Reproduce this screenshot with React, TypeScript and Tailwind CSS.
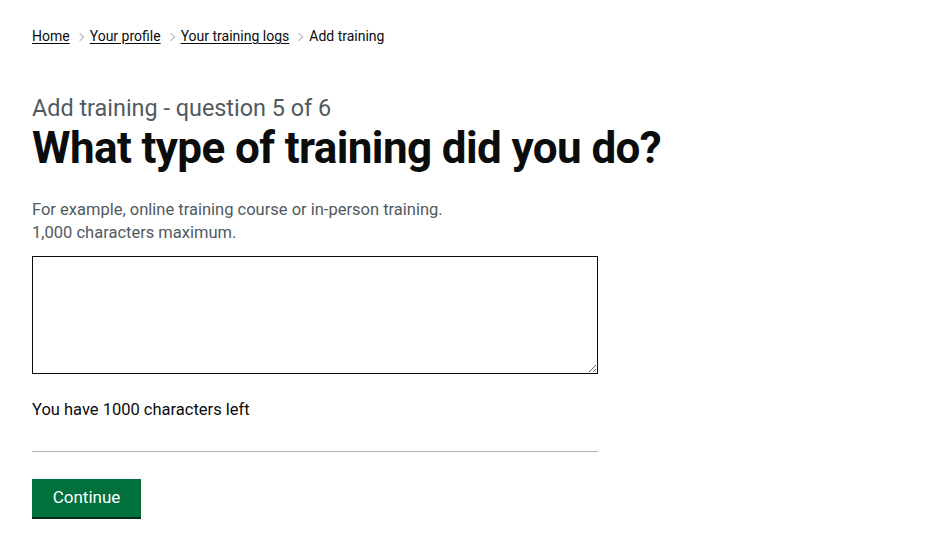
export default function App() {
  const crumbs = ['Home', 'Your profile', 'Your training logs']
  return (
    <div className="min-h-[549px] bg-white px-8 text-[#0b0c0c]" style={{ fontFamily: 'Roboto, "Liberation Sans", sans-serif' }}>
      {/* breadcrumbs */}
      <nav className="pt-[28px]">
        <ol className="flex items-center text-[14px] leading-[16px]">
          {crumbs.map((c) => (
            <li key={c} className="flex items-center">
              <a href="#" className="underline underline-offset-2 text-[#0b0c0c]">{c}</a>
              <span className="mx-[7px] mt-[2px] inline-block h-[6px] w-[6px] rotate-45 border-r border-t border-[#b1b4b6]" />
            </li>
          ))}
          <li>Add training</li>
        </ol>
      </nav>

      <div className="w-[566px] pt-[50px]">
        <span className="block text-[23.4px] leading-[28px] text-[#505a5f]">Add training - question 5 of 6</span>
        <h1 className="mt-[2px] whitespace-nowrap text-[44px] font-bold leading-[48px] tracking-[-0.6px]">What type of training did you do?</h1>

        <div className="mt-[26px] text-[16.5px] leading-[23px] text-[#505a5f]">
          <p>For example, online training course or in-person training.</p>
          <p>1,000 characters maximum.</p>
        </div>

        <textarea className="mt-[12px] block h-[118px] w-[566px] border border-[#0b0c0c] bg-white p-1" />

        <p className="mt-[26px] text-[16.5px] leading-[20px]">You have 1000 characters left</p>

        <hr className="mt-[31px] border-0 border-t border-[#b1b4b6]" />

        <button className="mt-[27px] h-[38px] w-[109px] bg-[#00703c] text-[17px] text-white shadow-[0_2px_0_#002d18]">
          Continue
        </button>
      </div>
    </div>
  )
}
